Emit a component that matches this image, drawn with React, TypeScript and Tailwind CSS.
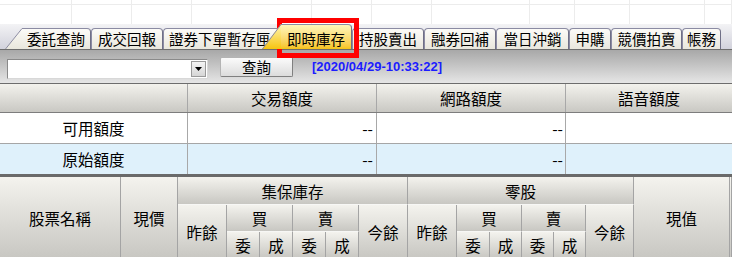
const cjk = { fontFamily: '"Noto Sans CJK TC", "Noto Sans", sans-serif' };

const gridLines = [72, 60, 60, 120, 60, 60, 98, 45, 55, 75, 27];

const tabs = [
  { label: '成交回報', w: 'w-[72px]' },
  { label: '證券下單暫存匣', w: 'w-[121px]', left: true },
];
const tabsAfter = [
  { label: '持股賣出', w: 'w-[72px]' },
  { label: '融券回補', w: 'w-[72px]' },
  { label: '當日沖銷', w: 'w-[73px]' },
  { label: '申購', w: 'w-[42px]' },
  { label: '競價拍賣', w: 'w-[71px]' },
  { label: '帳務', w: 'w-[39px]' },
];

function Tab({ label, w, left }: { label: string; w: string; left?: boolean }) {
  return (
    <div
      className={`${w} h-[21px] shrink-0 border border-b-0 border-[#8b8ba3] border-r-[#6f6f86] rounded-t-[4px] bg-linear-to-b from-[#fcfbf8] to-[#e9e7dd] flex items-center text-[14.5px] leading-[20px] text-black overflow-hidden whitespace-nowrap ${left ? 'pl-[5px]' : 'justify-center'}`}
    >
      {label}
    </div>
  );
}

type Cell = { t: string; c: string };

const head: Cell[] = [
  { t: '股票名稱', c: 'col-start-1 row-start-1 row-span-3' },
  { t: '現價', c: 'col-start-2 row-start-1 row-span-3' },
  { t: '集保庫存', c: 'col-start-3 col-span-6 row-start-1' },
  { t: '昨餘', c: 'col-start-3 row-start-2 row-span-2' },
  { t: '買', c: 'col-start-4 col-span-2 row-start-2' },
  { t: '賣', c: 'col-start-6 col-span-2 row-start-2' },
  { t: '今餘', c: 'col-start-8 row-start-2 row-span-2' },
  { t: '委', c: 'col-start-4 row-start-3' },
  { t: '成', c: 'col-start-5 row-start-3' },
  { t: '委', c: 'col-start-6 row-start-3' },
  { t: '成', c: 'col-start-7 row-start-3' },
  { t: '零股', c: 'col-start-9 col-span-6 row-start-1' },
  { t: '昨餘', c: 'col-start-9 row-start-2 row-span-2' },
  { t: '買', c: 'col-start-10 col-span-2 row-start-2' },
  { t: '賣', c: 'col-start-12 col-span-2 row-start-2' },
  { t: '今餘', c: 'col-start-14 row-start-2 row-span-2' },
  { t: '委', c: 'col-start-10 row-start-3' },
  { t: '成', c: 'col-start-11 row-start-3' },
  { t: '委', c: 'col-start-12 row-start-3' },
  { t: '成', c: 'col-start-13 row-start-3' },
  { t: '現值', c: 'col-start-15 row-start-1 row-span-3' },
  { t: '', c: 'col-start-16 row-start-1 row-span-3' },
];

export default function App() {
  return (
    <div className="relative w-[732px] h-[257px] overflow-hidden bg-white" style={cjk}>
      {/* blank sheet grid above the tabs */}
      <div className="h-[24px] flex">
        {gridLines.map((w, i) => (
          <div key={i} className="h-full shrink-0 border-r border-[#ececec] flex flex-col" style={{ width: w }}>
            <div className="h-[5px] border-b border-[#ececec]" />
          </div>
        ))}
      </div>

      {/* tab strip */}
      <div className="h-[25px] flex items-end pl-[5px] bg-linear-to-b from-[#f3f3f5] to-[#d2d2dc]">
        <div className="flex h-[21px] shrink-0">
          <svg width="17" height="21" className="shrink-0">
            <defs>
              <linearGradient id="tg" x1="0" y1="0" x2="0" y2="1">
                <stop offset="0" stopColor="#fcfbf8" />
                <stop offset="1" stopColor="#e9e7dd" />
              </linearGradient>
            </defs>
            <polygon points="0,21 17,0 17,21" fill="url(#tg)" />
            <line x1="0.5" y1="21" x2="17" y2="0.5" stroke="#8b8ba3" />
          </svg>
          <div className="w-[69px] h-[21px] border-t border-r border-[#8b8ba3] border-r-[#6f6f86] rounded-tr-[4px] bg-linear-to-b from-[#fcfbf8] to-[#e9e7dd] flex items-center justify-center text-[14.5px] leading-[20px]">
            委託查詢
          </div>
        </div>
        {tabs.map((t, i) => (
          <Tab key={i} {...t} />
        ))}
        <div className="relative z-10 -ml-[22px] flex h-[25px] shrink-0">
          <svg width="19" height="25" className="shrink-0">
            <defs>
              <linearGradient id="yg" x1="0" y1="0" x2="0" y2="1">
                <stop offset="0" stopColor="#fff6b8" />
                <stop offset="1" stopColor="#f6c410" />
              </linearGradient>
            </defs>
            <polygon points="0,25 19,0 19,25" fill="url(#yg)" />
            <line x1="0.5" y1="25" x2="19" y2="0.5" stroke="#8b8ba3" />
          </svg>
          <div className="w-[71px] h-[25px] border-t border-r border-[#8b8ba3] border-r-[#6f6f86] rounded-tr-[4px] bg-linear-to-b from-[#fff6b8] to-[#f6c410] flex items-center justify-center text-[14.5px] leading-[20px] pt-[3px]">
            即時庫存
          </div>
        </div>
        {tabsAfter.map((t, i) => (
          <Tab key={i} {...t} />
        ))}
      </div>

      {/* query bar */}
      <div className="h-[35px] border-t border-b border-[#6d6d6d] bg-linear-to-b from-[#a8a8a8] to-[#e6e6e6] flex items-start">
        <div className="ml-[7px] mt-[9px] w-[201px] h-[20px] bg-white border border-[#8a8a8a] border-b-[#d8d8d8] border-r-[#d8d8d8] flex justify-end items-center pr-[1px]">
          <div className="w-[15px] h-[16px] bg-linear-to-b from-[#f4f4f4] to-[#d6d6d6] border border-[#9a9a9a] flex items-center justify-center">
            <svg width="7" height="4">
              <polygon points="0,0 7,0 3.5,4" fill="#000" />
            </svg>
          </div>
        </div>
        <div className="ml-[12px] mt-[7px] w-[73px] h-[20px] bg-linear-to-b from-[#fbfbfb] to-[#dcdcdc] border border-[#b4b4b4] border-b-[#808080] border-r-[#808080] rounded-[2px] flex items-center justify-center text-[14.5px] leading-[18px]">
          查詢
        </div>
        <div
          className="ml-[19px] mt-[9px] text-[13px] leading-[16px] font-bold text-[#1c1cff]"
          style={{ fontFamily: '"Liberation Sans", Arial, sans-serif' }}
        >
          [2020/04/29-10:33:22]
        </div>
      </div>

      {/* quota table */}
      <div className="text-[15.5px] leading-[20px] text-black">
        <div className="h-[29px] flex border-b border-[#7d7d7d] bg-linear-to-b from-[#f3f2ed] to-[#c9c8c3]">
          <div className="w-[188px] shrink-0 border-r border-[#a8a8a8]" />
          <div className="w-[189px] shrink-0 border-r border-[#a8a8a8] flex items-center justify-center">交易額度</div>
          <div className="w-[189px] shrink-0 border-r border-[#a8a8a8] flex items-center justify-center">網路額度</div>
          <div className="flex-1 flex items-center justify-center">語音額度</div>
        </div>
        {[
          { label: '可用額度', bg: 'bg-white h-[31px] border-b border-[#a6a6a6]' },
          { label: '原始額度', bg: 'bg-[#dff1fb] h-[33px] border-b-[3px] border-[#6a6a6a]' },
        ].map((r) => (
          <div key={r.label} className={`flex ${r.bg}`}>
            <div className="w-[188px] shrink-0 border-r border-[#a8a8a8] flex items-center justify-center">{r.label}</div>
            <div className="w-[189px] shrink-0 border-r border-[#a8a8a8] flex items-center justify-end pr-[3px]">--</div>
            <div className="w-[189px] shrink-0 border-r border-[#a8a8a8] flex items-center justify-end pr-[2px]">--</div>
            <div className="flex-1" />
          </div>
        ))}
      </div>

      {/* inventory header */}
      <div className="grid grid-cols-[121px_57px_49px_33px_33px_33px_33px_49px_49px_33px_32px_32px_32px_48px_96px_1fr] grid-rows-[28px_27px_27px] text-[15.5px] leading-[20px] text-black">
        {head.map((h, i) => (
          <div
            key={i}
            className={`${h.c} flex items-center justify-center border-r border-b border-r-[#a4a4a4] border-b-[#f7f7f5] bg-linear-to-b from-[#f4f3ee] to-[#c8c7c2]`}
          >
            {h.t}
          </div>
        ))}
      </div>

      {/* highlight box round the current tab */}
      <div className="absolute left-[277px] top-[18px] w-[82px] h-[40px] border-[5px] border-[#ff0000]" />
    </div>
  );
}
